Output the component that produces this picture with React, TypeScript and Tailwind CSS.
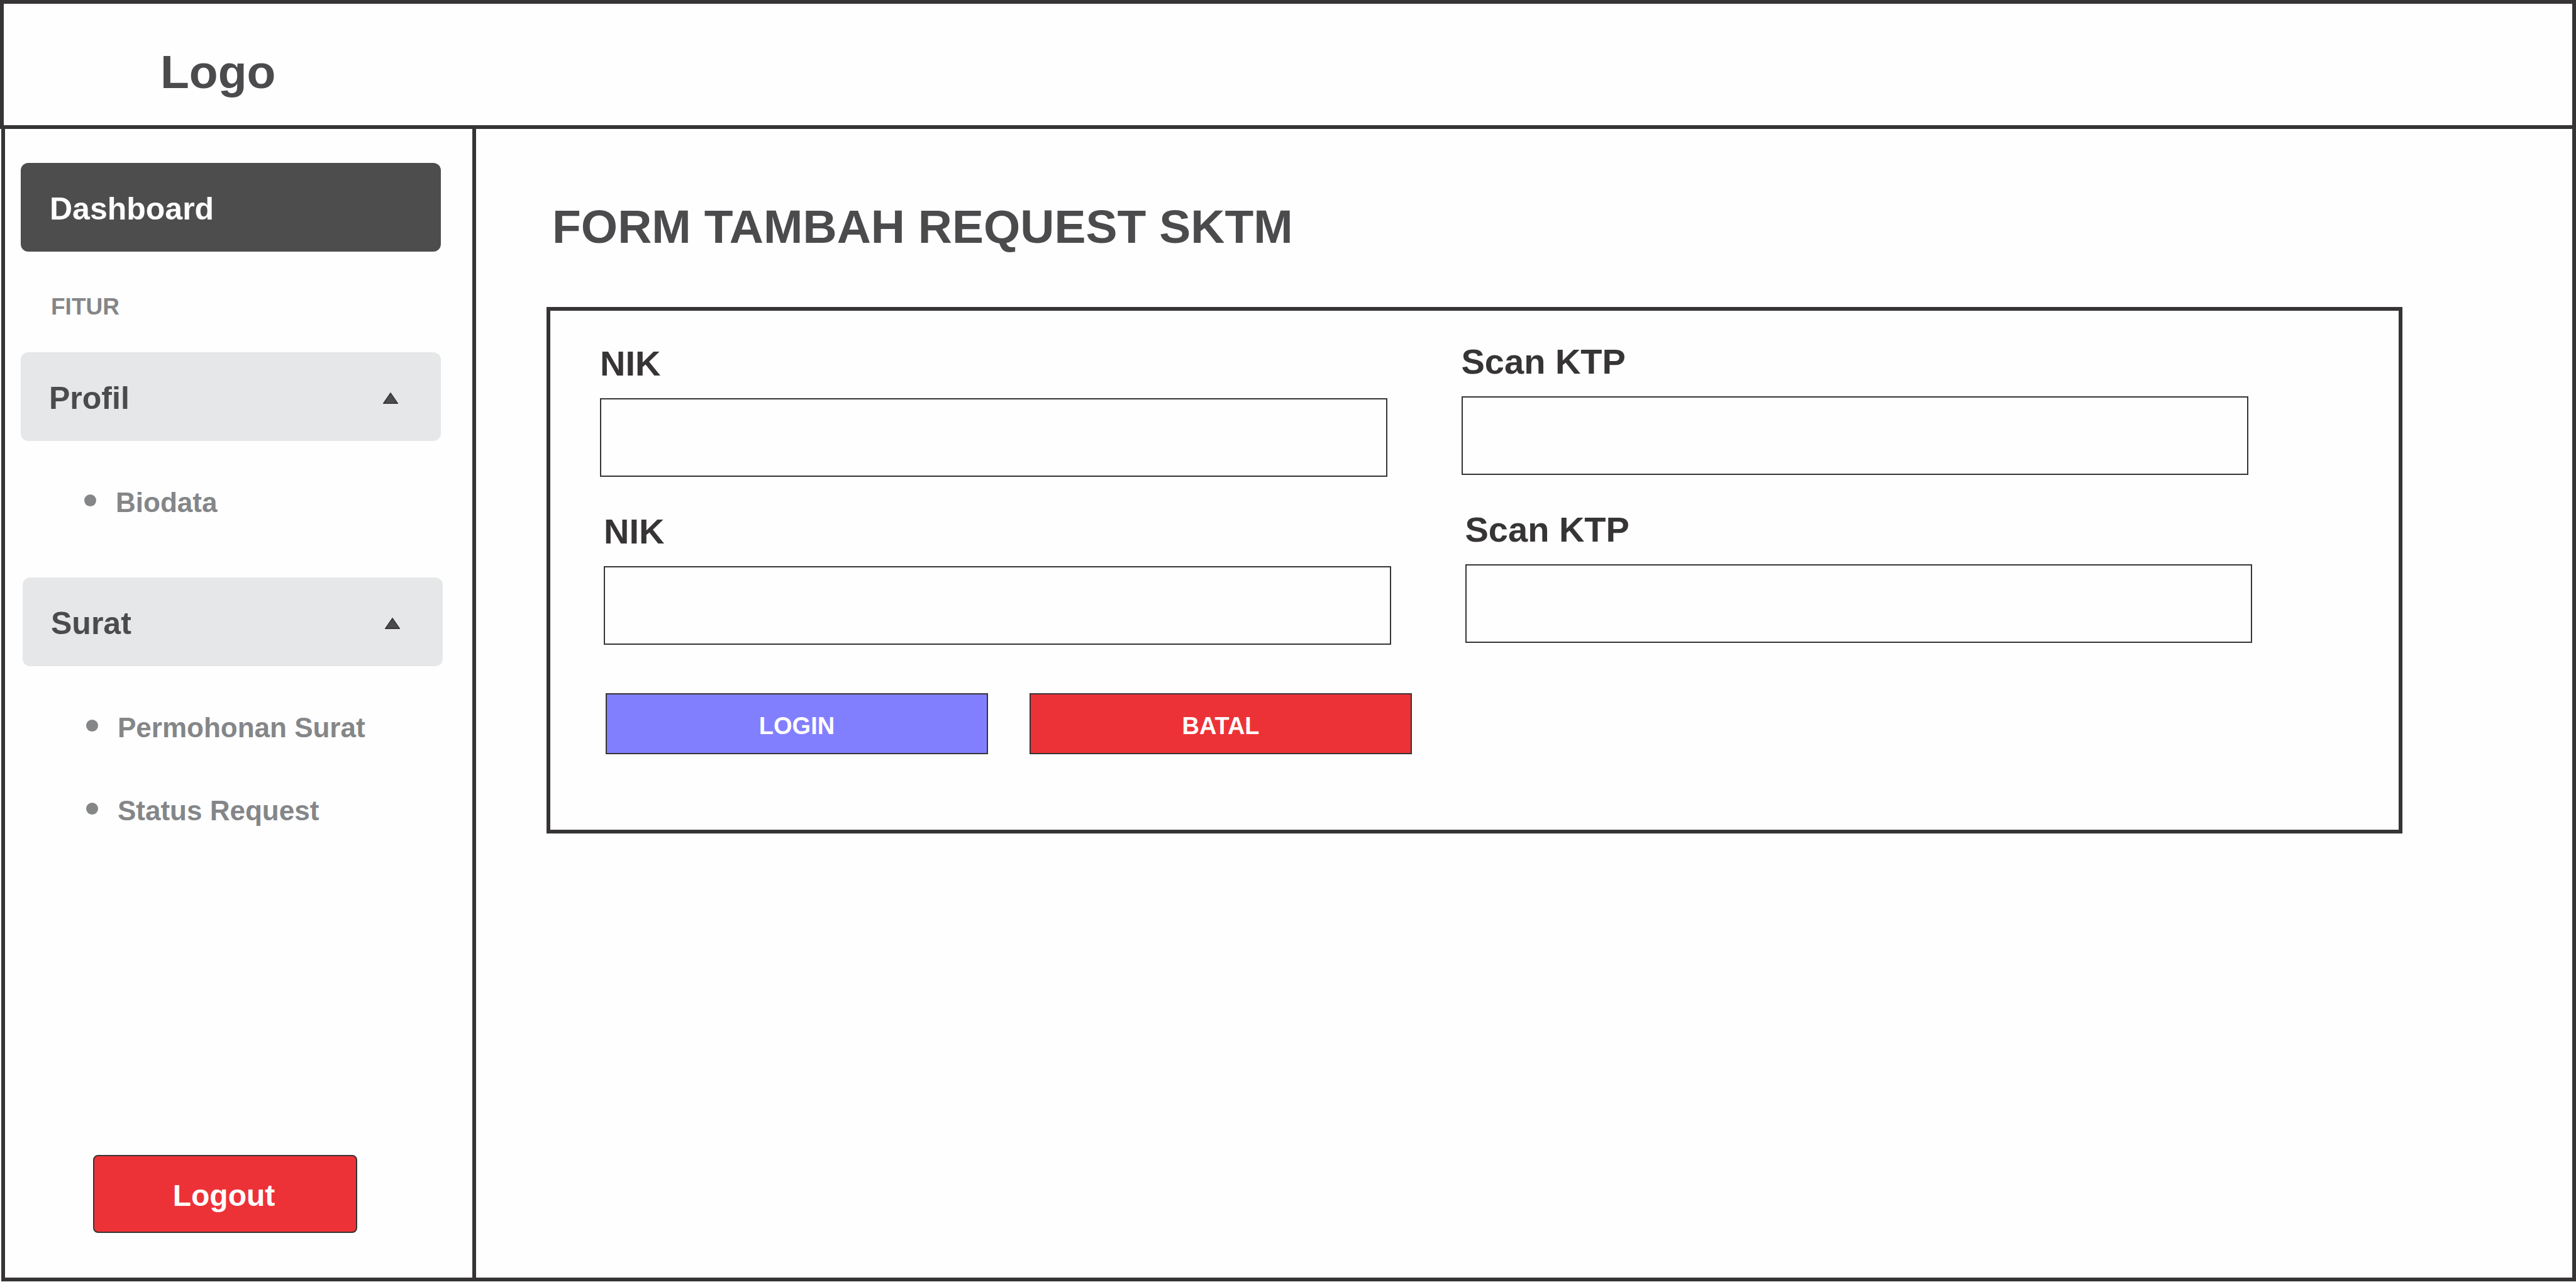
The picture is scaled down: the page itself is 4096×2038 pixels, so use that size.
import { useId, useState } from 'react';

type Section = {
  title: string;
  items: string[];
  className: string;
};

const sections: Section[] = [
  { title: 'Profil', items: ['Biodata'], className: 'mt-[52px]' },
  {
    title: 'Surat',
    items: ['Permohonan Surat', 'Status Request'],
    className: '-mr-[3px] ml-[3px] mt-[94px]',
  },
];

function Triangle({ open }: { open: boolean }) {
  return (
    <svg
      viewBox="0 0 24 18"
      className={open ? 'h-[18px] w-[24px]' : 'h-[18px] w-[24px] rotate-180'}
      aria-hidden="true"
    >
      <path d="M12 1 L23.2 17.2 L0.8 17.2 Z" fill="#4b4b4d" stroke="#373435" strokeWidth="1.6" />
    </svg>
  );
}

function MenuSection({ title, items, className }: Section) {
  const [open, setOpen] = useState(true);
  return (
    <section className={className}>
      <button
        type="button"
        aria-expanded={open}
        onClick={() => setOpen(!open)}
        className="flex h-[141px] w-full items-center justify-between rounded-[12px] bg-[#e6e7e8] pl-[45px] pr-[68px] pt-1 text-[50px] leading-[60px] text-[#4b4b4d]"
      >
        {title}
        <Triangle open={open} />
      </button>
      {open && (
        <ul className="mt-[73px] flex flex-col gap-[82px] pl-[101px]">
          {items.map((item) => (
            <li key={item}>
              <a
                href="#"
                className="flex items-center gap-[31px] text-[44px] leading-[50px] text-[#848688]"
              >
                <span className="mb-2 size-[19px] shrink-0 rounded-full bg-[#848688]" />
                {item}
              </a>
            </li>
          ))}
        </ul>
      )}
    </section>
  );
}

function Field({ label, className = '' }: { label: string; className?: string }) {
  const id = useId();
  return (
    <div className={`flex flex-col gap-[25px] ${className}`}>
      <label htmlFor={id} className="text-[56px] leading-[60px] text-[#373435]">
        {label}
      </label>
      <input
        id={id}
        type="text"
        className="h-[125px] w-full border-2 border-[#373435] bg-transparent px-6 text-[50px] text-[#373435]"
      />
    </div>
  );
}

export default function App() {
  return (
    <div className="flex min-h-screen flex-col bg-[#fefefe] pb-px font-['Liberation_Sans',Arial,sans-serif] font-bold">
      <header className="flex h-[205px] items-center border-6 border-[#373435] pl-[249px] pt-[22px]">
        <span className="text-[75px] leading-[80px] text-[#4b4b4d]">Logo</span>
      </header>

      <div className="ml-[2px] flex flex-1 border-x-6 border-b-6 border-[#373435]">
        <aside className="flex w-[749px] shrink-0 flex-col border-r-6 border-[#373435] pb-[71px] pl-[25px] pr-[50px] pt-[54px]">
          <nav aria-label="Menu">
            <a
              href="#"
              className="flex h-[141px] items-center rounded-[12px] bg-[#4d4d4d] pl-[46px] pt-1 text-[50px] leading-[60px] text-[#fefefe]"
            >
              Dashboard
            </a>
            <h2 className="mt-[68px] pl-[48px] text-[37px] leading-[40px] text-[#848688]">FITUR</h2>
            {sections.map((section) => (
              <MenuSection key={section.title} {...section} />
            ))}
          </nav>
          <button
            type="button"
            className="ml-[115px] mt-auto h-[124px] w-[420px] rounded-[8px] border-2 border-[#373435] bg-[#ed3237] pr-1 pt-1.5 text-[48px] leading-[60px] text-[#fefefe]"
          >
            Logout
          </button>
        </aside>

        <main className="flex-1 pl-[112px] pr-[270px] pt-[115px]">
          <h1 className="pl-[9px] text-[75px] leading-[80px] text-[#4b4b4d]">
            FORM TAMBAH REQUEST SKTM
          </h1>
          <form
            onSubmit={(event) => event.preventDefault()}
            className="mt-[88px] border-6 border-[#373435] pb-[120px] pt-[51px]"
          >
            <div className="grid grid-cols-2 items-start gap-[118px] pl-[79px] pr-[239px]">
              <Field label="NIK" className="pt-[3px]" />
              <Field label="Scan KTP" />
            </div>
            <div className="mt-[54px] grid grid-cols-2 items-start gap-[118px] pl-[85px] pr-[233px]">
              <Field label="NIK" className="pt-[3px]" />
              <Field label="Scan KTP" />
            </div>
            <div className="mt-[77px] flex gap-[66px] pl-[88px]">
              <button
                type="submit"
                className="h-[97px] w-[608px] border-2 border-[#373435] bg-[#827fff] pt-1.5 text-[38px] leading-[40px] text-[#fefefe]"
              >
                LOGIN
              </button>
              <button
                type="button"
                className="h-[97px] w-[608px] border-2 border-[#373435] bg-[#ed3237] pt-1.5 text-[38px] leading-[40px] text-[#fefefe]"
              >
                BATAL
              </button>
            </div>
          </form>
        </main>
      </div>
    </div>
  );
}
